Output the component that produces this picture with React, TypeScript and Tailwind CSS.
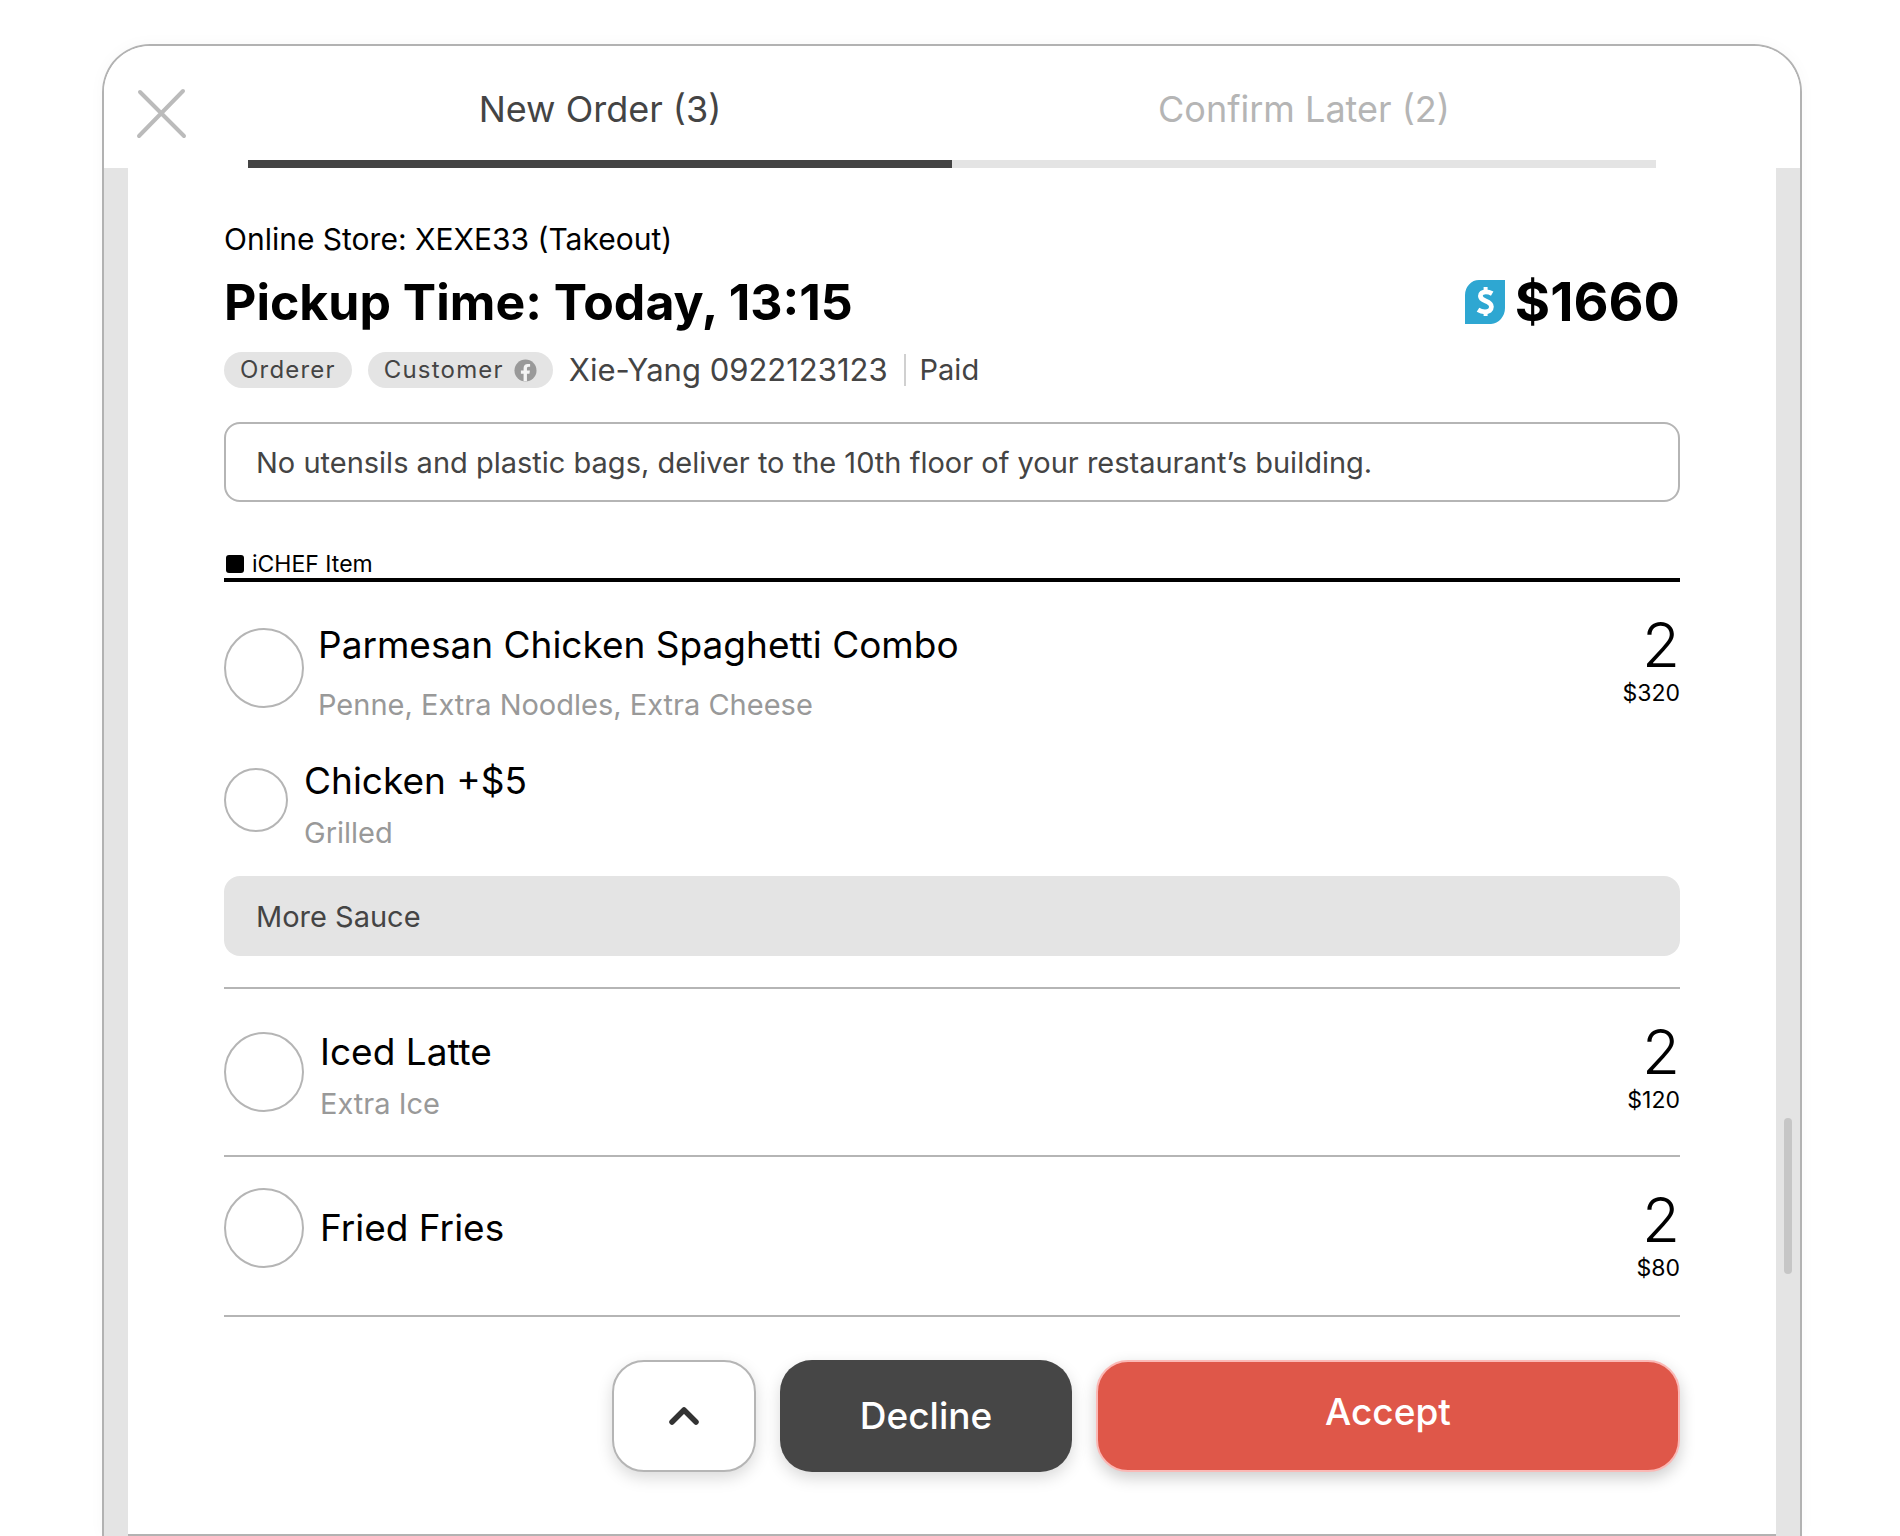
import { useState } from "react";

type Line = { name: string; note?: string };

type OrderItem = Line & {
  qty: number;
  price: string;
  circle: string;
  text: string;
  extras?: Line[];
  remark?: string;
};

const items: OrderItem[] = [
  {
    name: "Parmesan Chicken Spaghetti Combo",
    note: "Penne, Extra Noodles, Extra Cheese",
    qty: 2,
    price: "$320",
    circle: "mt-[15px]",
    text: "mt-2 ml-3.5 gap-4",
    extras: [{ name: "Chicken +$5", note: "Grilled" }],
    remark: "More Sauce",
  },
  {
    name: "Iced Latte",
    note: "Extra Ice",
    qty: 2,
    price: "$120",
    circle: "mt-3",
    text: "mt-2 ml-4 gap-2",
  },
  {
    name: "Fried Fries",
    qty: 2,
    price: "$80",
    circle: "",
    text: "mt-4 ml-4",
  },
];

function ItemText({ id, line, className }: { id: string; line: Line; className: string }) {
  return (
    <label htmlFor={id} className={`flex flex-col ${className}`}>
      <span className="text-[37px] leading-12 text-black">{line.name}</span>
      {line.note && <span className="text-[29px] leading-10 text-[#999]">{line.note}</span>}
    </label>
  );
}

function ItemRow({ item, index }: { item: OrderItem; index: number }) {
  const id = `item-${index}`;
  return (
    <li className="border-b-2 border-[#b5b5b5] py-[31px]">
      <div className="flex items-start">
        <input
          id={id}
          type="checkbox"
          className={`size-20 shrink-0 appearance-none rounded-full border-2 border-[#b5b5b5] checked:bg-[#b5b5b5] ${item.circle}`}
        />
        <ItemText id={id} line={item} className={item.text} />
        <div className="ml-auto flex flex-col items-end text-black">
          <span className="text-[62px] leading-16 font-light">{item.qty}</span>
          <span className="text-[23px] leading-8">{item.price}</span>
        </div>
      </div>
      {item.extras?.map((extra, i) => (
        <div key={extra.name} className="mt-8 flex items-start">
          <input
            id={`${id}-${i}`}
            type="checkbox"
            className="mt-[11px] size-16 shrink-0 appearance-none rounded-full border-2 border-[#b5b5b5] checked:bg-[#b5b5b5]"
          />
          <ItemText id={`${id}-${i}`} line={extra} className="ml-4 gap-2" />
        </div>
      ))}
      {item.remark && (
        <p className="mt-[23px] flex h-20 items-center rounded-2xl bg-[#e4e4e4] px-8 pt-0.5 text-[29px] leading-10 text-[#444]">
          {item.remark}
        </p>
      )}
    </li>
  );
}

export default function App() {
  const [tab, setTab] = useState(0);
  const tabs = ["New Order (3)", "Confirm Later (2)"];

  return (
    <div className="bg-white pt-11 pr-[98px] pl-[102px] font-['Inter',sans-serif]">
      <div className="overflow-hidden rounded-t-[48px] border-x-2 border-t-2 border-[#b2b2b2] shadow-[0_0_16px_rgba(0,0,0,0.03)]">
        <header className="grid grid-cols-[144px_1fr_144px] bg-white">
          <button type="button" aria-label="Close" className="mt-[42px] ml-8 size-[52px] text-[#bbb]">
            <svg viewBox="0 0 52 52" fill="none" stroke="currentColor" strokeWidth="4" strokeLinecap="round">
              <path d="M4 4 48 48M47 3 3 48" />
            </svg>
          </button>
          <div role="tablist" className="grid grid-cols-2">
            {tabs.map((label, i) => (
              <button
                key={label}
                type="button"
                role="tab"
                aria-selected={tab === i}
                onClick={() => setTab(i)}
                className={`h-[122px] border-b-8 pt-3 text-[36px] leading-12 ${
                  tab === i ? "border-[#444] text-[#444]" : "border-[#e4e4e4] text-[#b5b5b5]"
                }`}
              >
                {label}
              </button>
            ))}
          </div>
        </header>

        <div className="flex bg-[#e4e4e4]">
          <main className="ml-6 flex-1 border-b-2 border-[#b2b2b2] bg-white px-24 pt-[51px] pb-[62px]">
            <p className="text-[30px] leading-10 text-black">Online Store: XEXE33 (Takeout)</p>
            <div className="mt-[11px] flex items-center justify-between leading-16 font-bold text-black">
              <h1 className="text-[50px]">Pickup Time: Today, 13:15</h1>
              <div className="flex items-center gap-2.5 text-[54px]">
                <svg viewBox="0 0 40 44" className="h-11 w-10" fill="none">
                  <path d="M14 0H40V28A15 16 0 0 1 26 44H0V15A14 15 0 0 1 14 0Z" fill="#2ea7d2" />
                  <path
                    d="M27.2 13.6C25 12.3 23 11.8 20.7 11.8C17.5 11.8 15.4 13.4 15.4 16C15.4 22.2 26.4 19.8 26.4 26.8C26.4 30 23.8 31.8 20 31.8C17.6 31.8 15.2 31.2 13 29.8"
                    stroke="#fff"
                    strokeWidth="4.8"
                  />
                  <path d="M20.6 7V12M20.6 31V36" stroke="#fff" strokeWidth="4" />
                </svg>
                <span>$1660</span>
              </div>
            </div>

            <div className="mt-[18px] flex h-9 items-center leading-9 text-[#444]">
              <span className="rounded-full bg-[#e4e4e4] px-4 text-[24px] tracking-wider">Orderer</span>
              <span className="ml-4 flex items-center gap-2.5 rounded-full bg-[#e4e4e4] px-4 text-[24px] tracking-wider">
                Customer
                <svg viewBox="0 0 24 24" className="size-[23px]">
                  <circle cx="12" cy="12" r="11.5" fill="#999" />
                  <path
                    d="M10 23.3V15.4H7.2V12H10V9.6C10 6.7 11.7 5.1 14.3 5.1C15.5 5.1 16.8 5.3 16.8 5.3V8.1H15.3C13.9 8.1 13.5 9 13.5 9.9V12H16.6L16.1 15.4H13.5V23.3Z"
                    fill="#f4f4f4"
                  />
                </svg>
              </span>
              <span className="ml-4 text-[31px]">Xie-Yang 0922123123</span>
              <span className="mr-3.5 ml-4 h-8 w-0.5 bg-[#d0d0d0]" />
              <span className="text-[29px]">Paid</span>
            </div>

            <p className="mt-[34px] flex h-20 items-center rounded-2xl border-2 border-[#b5b5b5] px-[30px] pt-0.5 text-[29px] leading-10 text-[#444]">
              No utensils and plastic bags, deliver to the 10th floor of your restaurant’s building.
            </p>

            <h2 className="mt-[46px] flex items-center gap-2 border-b-4 border-black pt-0.5 text-[23px] leading-7 text-black">
              <span className="ml-0.5 size-[18px] rounded-[3px] bg-black" />
              iCHEF Item
            </h2>
            <ul>
              {items.map((item, i) => (
                <ItemRow key={item.name} item={item} index={i} />
              ))}
            </ul>

            <div className="mt-[43px] flex justify-end gap-6 text-[37px] leading-12 font-medium text-white">
              <button
                type="button"
                aria-label="Show more actions"
                className="flex h-28 w-36 items-center justify-center rounded-[32px] border-2 border-[#b5b5b5] bg-white text-[#333] shadow-[0_6px_16px_rgba(0,0,0,0.15)]"
              >
                <svg viewBox="0 0 32 20" className="h-5 w-8" fill="none" stroke="currentColor" strokeWidth="5.5" strokeLinecap="round" strokeLinejoin="round">
                  <path d="M4 16 16 4 28 16" />
                </svg>
              </button>
              <button
                type="button"
                className="h-28 w-[292px] rounded-[32px] bg-[#464646] shadow-[0_6px_16px_rgba(0,0,0,0.15)]"
              >
                Decline
              </button>
              <button
                type="button"
                className="h-28 w-[584px] rounded-[32px] border-2 border-[#fbb8b5] bg-[#df5749] pb-2 shadow-[0_6px_16px_rgba(0,0,0,0.2)]"
              >
                Accept
              </button>
            </div>
          </main>
          <div className="w-6 px-2 pt-[950px]">
            <div className="h-[156px] rounded-full bg-[#c6c6c6]" />
          </div>
        </div>
      </div>
    </div>
  );
}
